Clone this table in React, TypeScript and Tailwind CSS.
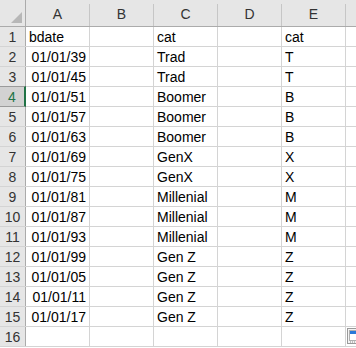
import React from "react";

const rows: [string, string, string][] = [
  ["bdate", "cat", "cat"],
  ["01/01/39", "Trad", "T"],
  ["01/01/45", "Trad", "T"],
  ["01/01/51", "Boomer", "B"],
  ["01/01/57", "Boomer", "B"],
  ["01/01/63", "Boomer", "B"],
  ["01/01/69", "GenX", "X"],
  ["01/01/75", "GenX", "X"],
  ["01/01/81", "Millenial", "M"],
  ["01/01/87", "Millenial", "M"],
  ["01/01/93", "Millenial", "M"],
  ["01/01/99", "Gen Z", "Z"],
  ["01/01/05", "Gen Z", "Z"],
  ["01/01/11", "Gen Z", "Z"],
  ["01/01/17", "Gen Z", "Z"],
  ["", "", ""],
];

const cols = ["A", "B", "C", "D", "E"];

function Cell({ children, right }: { children?: React.ReactNode; right?: boolean }) {
  return (
    <div
      className={`w-[64px] shrink-0 h-full border-r border-[#d4d4d4] flex items-center px-[3px] pt-[1px] ${
        right ? "justify-end" : "justify-start"
      }`}
    >
      {children}
    </div>
  );
}

export default function App() {
  return (
    <div
      className="relative w-[356px] h-[348px] overflow-hidden bg-white text-[14px] text-black"
      style={{ fontFamily: '"Liberation Sans", Arial, sans-serif' }}
    >
      {/* column headers */}
      <div className="flex h-[27px] bg-[#e6e6e6] border-b border-[#ababab]">
        <div className="w-[26px] shrink-0 border-r border-[#ababab] flex items-end justify-end pr-[3px] pb-[3px]">
          <svg width="11" height="11" viewBox="0 0 11 11">
            <polygon points="11,0 11,11 0,11" fill="#b7b7b7" />
          </svg>
        </div>
        {cols.map((c) => (
          <div key={c} className="w-[64px] shrink-0 flex flex-col">
            <div className="h-[8px]" />
            <div className="flex-1 flex items-center justify-center border-r border-[#c6c6c6] text-[#333] pb-[1px]">
              {c}
            </div>
          </div>
        ))}
        <div className="flex-1" />
      </div>

      {rows.map((r, i) => {
        const selected = i === 3;
        return (
          <div key={i} className="flex h-[20px] border-b border-[#d4d4d4]">
            <div
              className={`w-[26px] shrink-0 flex items-center justify-center pt-[1px] ${
                selected
                  ? "bg-[#d2d2d2] text-[#217346] border-r-2 border-[#217346] -mt-px border-t border-t-[#9b9b9b] border-b border-b-[#9b9b9b] h-[21px]"
                  : "bg-[#e6e6e6] text-[#333] border-r border-[#ababab]"
              }`}
            >
              {i + 1}
            </div>
            <Cell right={i > 0}>{r[0]}</Cell>
            <Cell />
            <Cell>{r[1]}</Cell>
            <Cell />
            <Cell>{r[2]}</Cell>
            <div className="flex-1" />
          </div>
        );
      })}

      {/* paste options button */}
      <div className="absolute left-[347px] top-[328px]">
        <svg width="12" height="16" viewBox="0 0 12 16">
          <rect x="0.5" y="0.5" width="11" height="15" fill="#f3f3f3" stroke="#9a9a9a" />
          <rect x="2.5" y="2.5" width="9" height="10" fill="#ffffff" stroke="#b0b0b0" />
          <rect x="3" y="3" width="8" height="3" fill="#2b78d8" />
          <line x1="3" y1="14" x2="11" y2="14" stroke="#888" strokeDasharray="1 1" />
        </svg>
      </div>
    </div>
  );
}
